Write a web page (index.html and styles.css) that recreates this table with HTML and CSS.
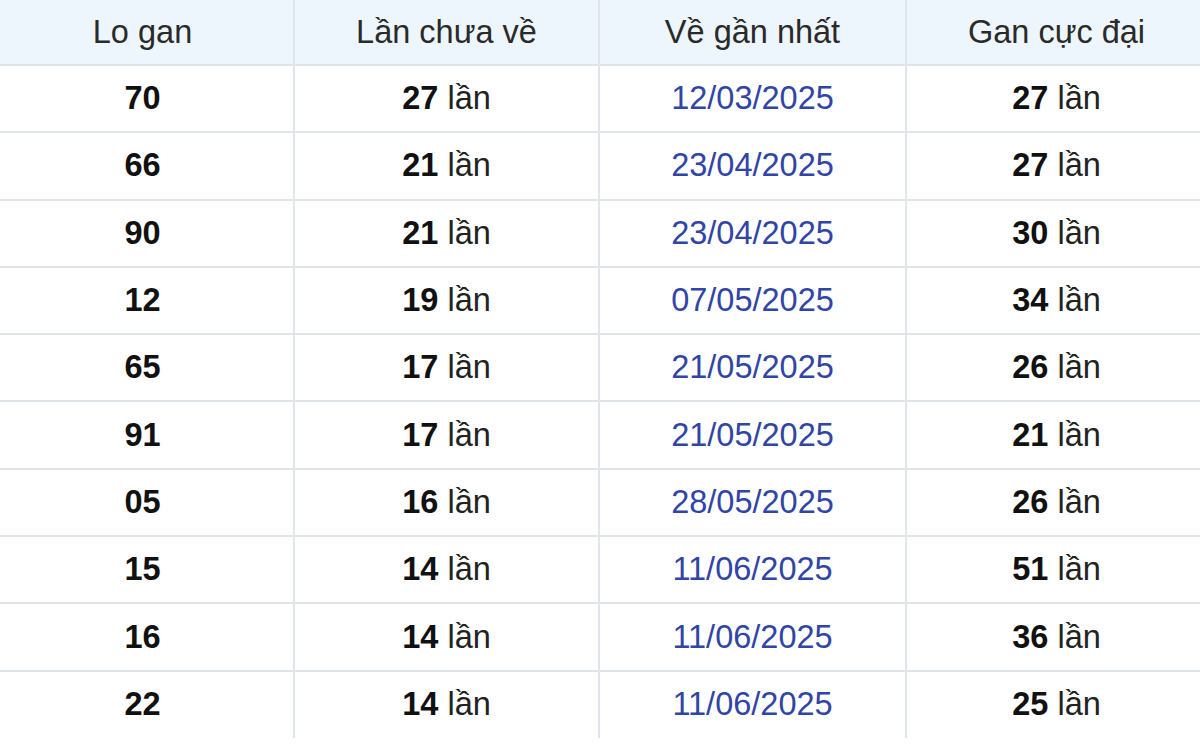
FILE: index.html
```html
<!DOCTYPE html>
<html lang="vi">
<head>
<meta charset="utf-8">
<title>Lo gan</title>
<link rel="stylesheet" href="styles.css">
</head>
<body>
<table class="gan">
  <colgroup>
    <col class="c1"><col class="c2"><col class="c3"><col class="c4">
  </colgroup>
  <thead>
    <tr><th>Lo gan</th><th>Lần chưa về</th><th>Về gần nhất</th><th>Gan cực đại</th></tr>
  </thead>
  <tbody>
    <tr><td><b>70</b></td><td><b>27</b> lần</td><td class="date">12/03/2025</td><td><b>27</b> lần</td></tr>
    <tr><td><b>66</b></td><td><b>21</b> lần</td><td class="date">23/04/2025</td><td><b>27</b> lần</td></tr>
    <tr><td><b>90</b></td><td><b>21</b> lần</td><td class="date">23/04/2025</td><td><b>30</b> lần</td></tr>
    <tr><td><b>12</b></td><td><b>19</b> lần</td><td class="date">07/05/2025</td><td><b>34</b> lần</td></tr>
    <tr><td><b>65</b></td><td><b>17</b> lần</td><td class="date">21/05/2025</td><td><b>26</b> lần</td></tr>
    <tr><td><b>91</b></td><td><b>17</b> lần</td><td class="date">21/05/2025</td><td><b>21</b> lần</td></tr>
    <tr><td><b>05</b></td><td><b>16</b> lần</td><td class="date">28/05/2025</td><td><b>26</b> lần</td></tr>
    <tr><td><b>15</b></td><td><b>14</b> lần</td><td class="date">11/06/2025</td><td><b>51</b> lần</td></tr>
    <tr><td><b>16</b></td><td><b>14</b> lần</td><td class="date">11/06/2025</td><td><b>36</b> lần</td></tr>
    <tr><td><b>22</b></td><td><b>14</b> lần</td><td class="date">11/06/2025</td><td><b>25</b> lần</td></tr>
  </tbody>
</table>
</body>
</html>
```

FILE: styles.css
```css
html, body {
  margin: 0;
  padding: 0;
  background: #ffffff;
  overflow: hidden;
}
body {
  font-family: "Liberation Sans", Arial, sans-serif;
  font-size: 32.5px;
  color: #222222;
}
.gan {
  width: 1214px;
  margin-left: -8px;
  border-collapse: collapse;
  table-layout: fixed;
}
.c1 { width: 302px; }
.c2 { width: 305px; }
.c3 { width: 307px; }
.c4 { width: 300px; }
.gan th,
.gan td {
  padding: 0;
  text-align: center;
  vertical-align: middle;
  border-left: 2px solid #e1e4e8;
  border-bottom: 2px solid #e1e4e8;
}
.gan th:first-child,
.gan td:first-child {
  border-left: none;
}
.gan tbody tr:last-child td {
  border-bottom: none;
}
.gan thead tr {
  height: 65px;
}
.gan th {
  background: #eef6fd;
  font-weight: normal;
  color: #2a2a2a;
}
.gan tbody tr {
  height: 67.3px;
}
.gan td {
  color: #222222;
}
.gan td b {
  color: #111111;
  font-weight: bold;
}
.gan td.date {
  color: #3045a6;
}
```
